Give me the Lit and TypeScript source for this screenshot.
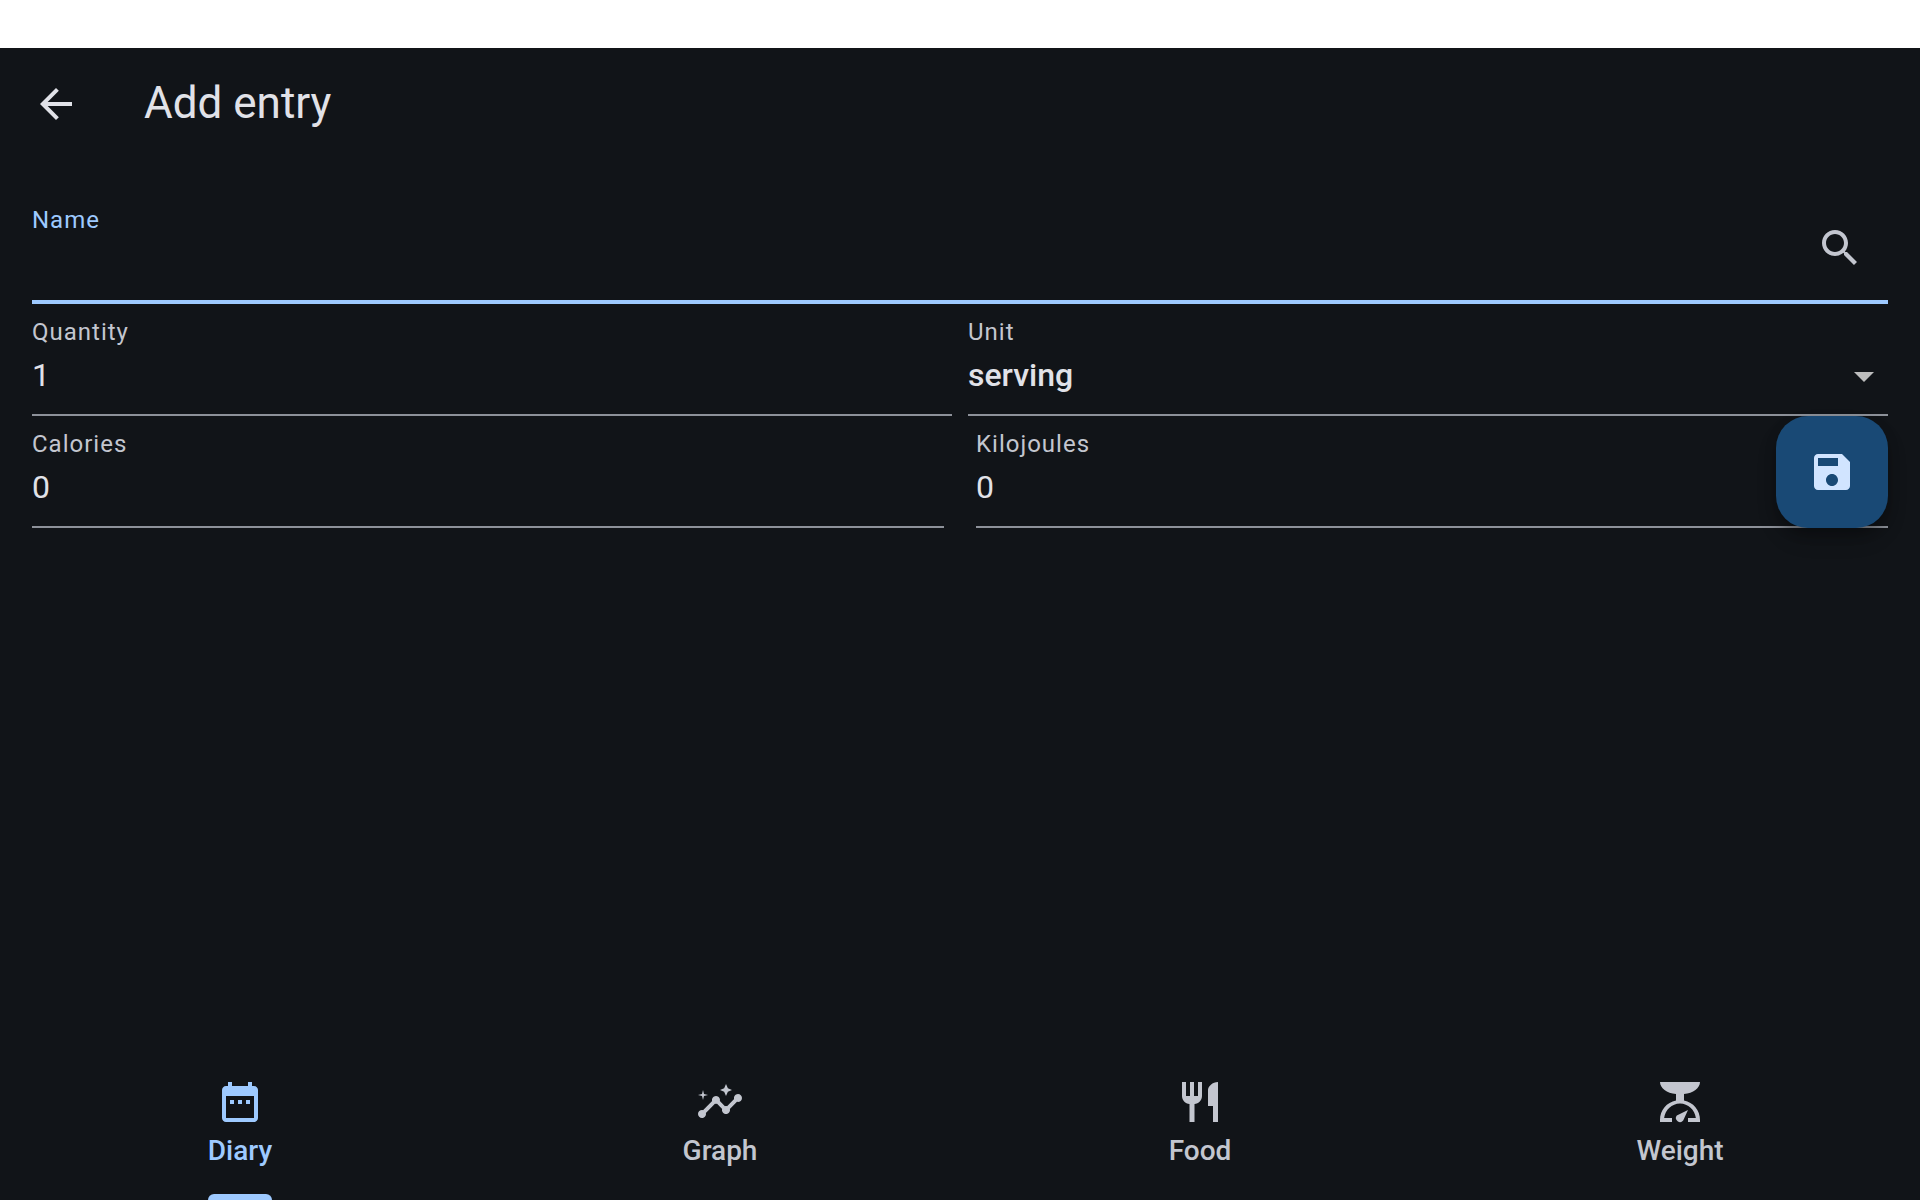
import { LitElement, html, css, svg } from "lit";
import { customElement, property, state } from "lit/decorators.js";

const ICONS: Record<string, string> = {
  back: "M20 11H7.83l5.59-5.59L12 4l-8 8 8 8 1.41-1.41L7.83 13H20v-2z",
  search:
    "M15.5 14h-.79l-.28-.27C15.41 12.59 16 11.11 16 9.5 16 5.91 13.09 3 9.5 3S3 5.91 3 9.5 5.91 16 9.5 16c1.61 0 3.09-.59 4.23-1.57l.27.28v.79l5 4.99L20.49 19l-4.99-5zm-6 0C7.01 14 5 11.99 5 9.5S7.01 5 9.5 5 14 7.01 14 9.5 11.99 14 9.5 14z",
  arrowDown: "M7 10l5 5 5-5z",
  save: "M17 3H5c-1.11 0-2 .9-2 2v14c0 1.1.89 2 2 2h14c1.1 0 2-.9 2-2V7l-4-4zm-5 16c-1.66 0-3-1.34-3-3s1.34-3 3-3 3 1.34 3 3-1.34 3-3 3zm3-10H5V5h10v4z",
  diary:
    "M9 11H7v2h2v-2zm4 0h-2v2h2v-2zm4 0h-2v2h2v-2zm2-7h-1V2h-2v2H8V2H6v2H5c-1.11 0-1.99.9-1.99 2L3 20c0 1.1.89 2 2 2h14c1.1 0 2-.9 2-2V6c0-1.1-.9-2-2-2zm0 16H5V9h14v11z",
  graph:
    "M21 8c-1.45 0-2.26 1.44-1.93 2.51l-3.55 3.56c-.3-.09-.74-.09-1.04 0l-2.55-2.55C12.27 10.45 11.46 9 10 9c-1.45 0-2.27 1.44-1.93 2.52l-4.56 4.55C2.44 15.74 1 16.55 1 18c0 1.1.9 2 2 2 1.45 0 2.26-1.44 1.93-2.51l4.55-4.56c.3.09.74.09 1.04 0l2.55 2.55C12.73 16.55 13.54 18 15 18c1.45 0 2.27-1.44 1.93-2.52l3.56-3.55c1.07.33 2.51-.48 2.51-1.93 0-1.1-.9-2-2-2zM15 9l.94-2.07L18 6l-2.06-.93L15 3l-.92 2.07L12 6l2.08.93zM3.5 11L4 9l2-.5L4 8l-.5-2L3 8l-2 .5L3 9z",
  food: "M11 9H9V2H7v7H5V2H3v7c0 2.12 1.66 3.84 3.75 3.97V22h2.5v-9.03C11.34 12.84 13 11.12 13 9V2h-2v7zm5-3v8h2.5v8H21V2c-2.76 0-5 2.24-5 4z",
  weight:
    "M2 2H22C22 5 18.6 7.6 14 8V11.2C18.6 12.1 22 16 22 21V22H16V20H19.93C19.4 16 16.1 12.8 12 12.8S4.6 16 4.07 20H8V22H2V21C2 16 5.4 12.1 10 11.2V8C5.4 7.6 2 5 2 2ZM16 16L13.6 21.2A2 2 0 1 1 10.4 18.8Z",
};

@customElement("app-icon")
class AppIcon extends LitElement {
  @property() name = "";

  static styles = css`
    :host {
      display: block;
      flex: none;
      width: 48px;
      height: 48px;
    }
    .glyph {
      display: block;
      width: 100%;
      height: 100%;
      fill: currentColor;
    }
  `;

  render() {
    return html`<svg class="glyph" viewBox="0 0 24 24" aria-hidden="true">
      ${svg`<path d=${ICONS[this.name] ?? ""}></path>`}
    </svg>`;
  }
}

const TABS = [
  { id: "diary", label: "Diary" },
  { id: "graph", label: "Graph" },
  { id: "food", label: "Food" },
  { id: "weight", label: "Weight" },
];

@customElement("app-root")
class AppRoot extends LitElement {
  @state() private active = "diary";

  static styles = css`
    :host {
      --surface: #111418;
      --on-surface: #e1e2e8;
      --on-surface-variant: #c3c6cf;
      --outline: #8d9199;
      --primary: #9ecaff;
      --primary-container: #194975;
      --on-primary-container: #d1e4ff;
      display: flex;
      flex-direction: column;
      min-height: 100vh;
      background: var(--surface);
      color: var(--on-surface);
      font-family: Roboto, "Liberation Sans", sans-serif;
    }
    * {
      box-sizing: border-box;
    }
    button,
    input,
    select {
      margin: 0;
      padding: 0;
      border: 0;
      outline: 0;
      background: none;
      color: inherit;
      font: inherit;
    }
    button {
      cursor: pointer;
    }
    .status-bar {
      height: 48px;
      background: #ffffff;
    }
    .app-bar {
      display: flex;
      align-items: center;
      gap: 32px;
      height: 112px;
    }
    .icon-button {
      display: grid;
      place-items: center;
      flex: none;
      width: 96px;
      height: 96px;
    }
    .back {
      width: 112px;
    }
    .title {
      margin: 0;
      padding-bottom: 2px;
      font-size: 44px;
      font-weight: 400;
      line-height: 56px;
    }
    .content {
      flex: 1;
      padding: 32px;
    }
    .form {
      position: relative;
    }
    .row {
      display: grid;
      grid-template-columns: 1fr 1fr;
      gap: 16px;
    }
    .row.wide {
      gap: 32px;
    }
    .field {
      display: flex;
      align-items: center;
      height: 112px;
      box-shadow: inset 0 -2px var(--outline);
    }
    .field.focused {
      box-shadow: inset 0 -4px var(--primary);
    }
    .text {
      display: flex;
      flex: 1;
      flex-direction: column;
      align-self: stretch;
      min-width: 0;
      padding-top: 12px;
    }
    .label {
      color: var(--on-surface-variant);
      font-size: 24px;
      line-height: 32px;
      letter-spacing: 1px;
    }
    .focused .label {
      color: var(--primary);
    }
    .value {
      width: 100%;
      height: 54px;
      font-size: 32px;
      line-height: 54px;
    }
    .select-box {
      display: grid;
      align-items: center;
      height: 56px;
    }
    .select-box > * {
      grid-area: 1 / 1;
    }
    .select {
      align-self: start;
      appearance: none;
      font-weight: 500;
    }
    .chevron {
      justify-self: end;
      color: #bdbdbd;
      pointer-events: none;
    }
    .search {
      color: var(--on-surface-variant);
    }
    .fab {
      position: absolute;
      right: 0;
      bottom: 0;
      display: grid;
      place-items: center;
      width: 112px;
      height: 112px;
      border-radius: 32px;
      background: var(--primary-container);
      color: var(--on-primary-container);
      box-shadow:
        0 6px 12px rgba(0, 0, 0, 0.24),
        0 12px 20px rgba(0, 0, 0, 0.16);
    }
    .tabs {
      display: grid;
      grid-template-columns: repeat(4, 1fr);
      height: 144px;
    }
    .tab {
      display: flex;
      flex-direction: column;
      align-items: center;
      padding-top: 22px;
      color: var(--on-surface-variant);
    }
    .tab.selected {
      color: var(--primary);
    }
    .tab-label {
      display: flex;
      flex: 1;
      flex-direction: column;
      justify-content: space-between;
      padding-top: 4px;
      font-size: 28px;
      font-weight: 500;
      line-height: 42px;
    }
    .selected .tab-label::after {
      content: "";
      height: 6px;
      border-radius: 6px 6px 0 0;
      background: var(--primary);
    }
  `;

  render() {
    return html`
      <div class="status-bar"></div>
      <header class="app-bar">
        <button class="icon-button back" aria-label="Back"><app-icon name="back"></app-icon></button>
        <h1 class="title">Add entry</h1>
      </header>
      <main class="content">
        <form class="form" @submit=${(e: Event) => e.preventDefault()}>
          <div class="field focused">
            <div class="text">
              <label class="label" for="name">Name</label>
              <input class="value" id="name" type="text" autocomplete="off" />
            </div>
            <button class="icon-button search" type="button" aria-label="Search">
              <app-icon name="search"></app-icon>
            </button>
          </div>
          <div class="row">
            ${this.numberField("quantity", "Quantity", "1")}
            <div class="field">
              <div class="text">
                <label class="label" for="unit">Unit</label>
                <div class="select-box">
                  <select class="value select" id="unit">
                    <option selected>serving</option>
                  </select>
                  <app-icon class="chevron" name="arrowDown"></app-icon>
                </div>
              </div>
            </div>
          </div>
          <div class="row wide">
            ${this.numberField("calories", "Calories", "0")}
            ${this.numberField("kilojoules", "Kilojoules", "0")}
          </div>
          <button class="fab" type="submit" aria-label="Save"><app-icon name="save"></app-icon></button>
        </form>
      </main>
      <nav class="tabs">
        ${TABS.map(
          (tab) => html`
            <button
              class="tab ${tab.id === this.active ? "selected" : ""}"
              aria-current=${tab.id === this.active ? "page" : "false"}
              @click=${() => (this.active = tab.id)}
            >
              <app-icon name=${tab.id}></app-icon>
              <span class="tab-label">${tab.label}</span>
            </button>
          `,
        )}
      </nav>
    `;
  }

  private numberField(id: string, label: string, value: string) {
    return html`
      <div class="field">
        <div class="text">
          <label class="label" for=${id}>${label}</label>
          <input class="value" id=${id} type="text" inputmode="decimal" .value=${value} />
        </div>
      </div>
    `;
  }
}
